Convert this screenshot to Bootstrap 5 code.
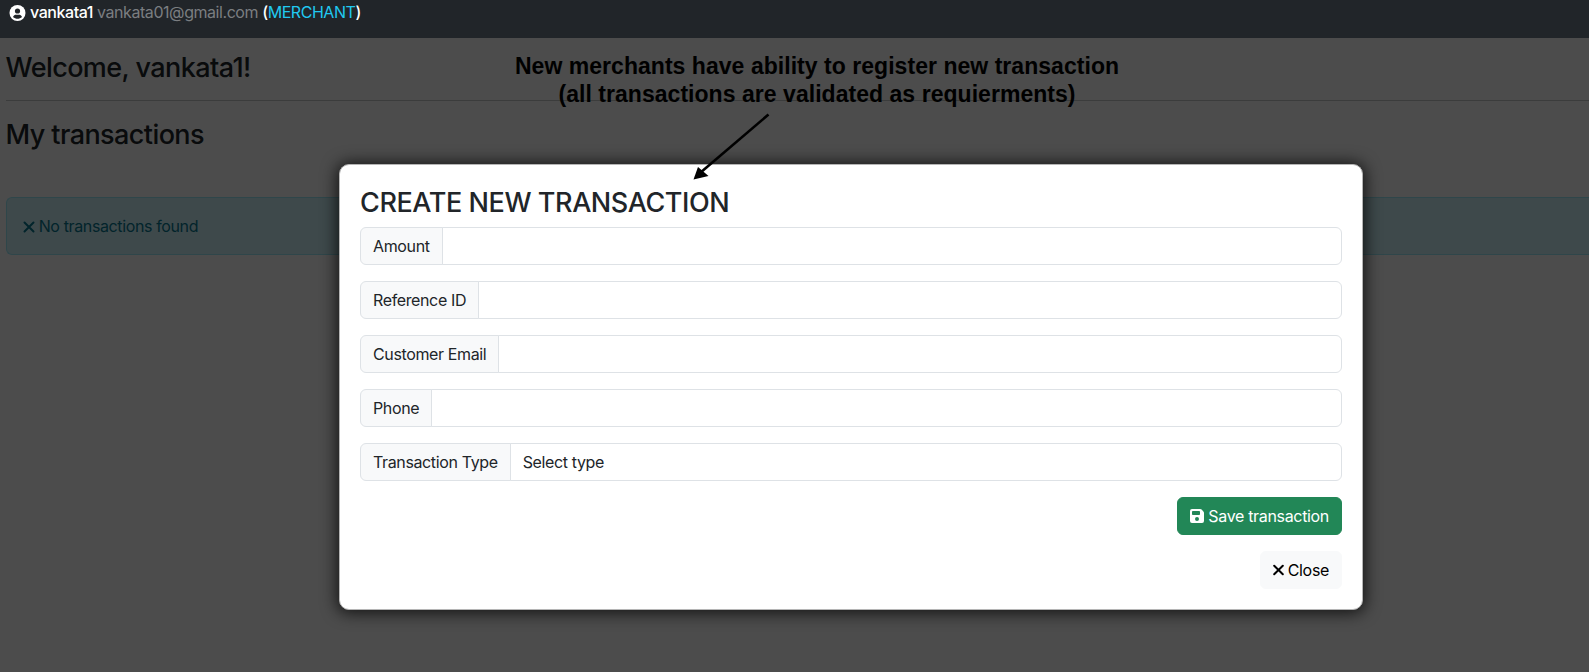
<!DOCTYPE html>
<html lang="en">
<head>
<meta charset="utf-8">
<meta name="viewport" content="width=device-width, initial-scale=1">
<title>Merchant transactions</title>
<link href="https://cdn.jsdelivr.net/npm/bootstrap@5.3.0/dist/css/bootstrap.min.css" rel="stylesheet">
<style>
html, body { height: 100%; overflow: hidden; }
body { font-family: Inter, "Liberation Sans", sans-serif; font-size: 16px; line-height: 24px; letter-spacing: -.37px; }
h3 { font-size: 27px; line-height: 33.6px; letter-spacing: -.58px; font-weight: 500; }
.topbar { height: 38px; padding-left: 9px; z-index: 1060; position: relative; }
.topbar .userline { letter-spacing: -.44px; }
.topbar .mail { color: #7b7e81; }
.topbar .role { color: #20c9f0; }
.page-body { padding: 13px 0 0 5.5px; }
.page-body h3 { margin: 0; }
.page-body hr { margin: 15.4px 0 16.6px; }
.notice { margin-top: 46px; border-right: 0; border-radius: 6px 0 0 6px; height: 58px; padding: 16px; }
.glyph { margin-bottom: 2px; }
.shade { position: absolute; inset: 0; background: rgba(0,0,0,.7); }
.dialog-box { position: absolute; left: 339px; top: 164px; width: 1024px; height: 446px; padding: 20px; background: #fff; border: 1px solid #b5b5b5; border-radius: 10px; box-shadow: 0 1px 16px 2px rgba(0,0,0,.75); }
.dialog-box h3 { padding-top: 1px; margin-bottom: 7px; letter-spacing: -.42px; }
.input-group-text, .form-control, .btn { letter-spacing: inherit; font-size: inherit; line-height: 24px; }
.input-group-text { background: #f8f9fa; }
.input-group { height: 38px; }
.btn { letter-spacing: -.33px; }
.btn-success { background: #228757; border-color: #228757; }
.note { position: absolute; left: 500px; top: 52px; width: 634px; font: bold 23px/28px "Liberation Sans", Arial, sans-serif; letter-spacing: .04px; color: #000; }
.pointer { position: absolute; left: 690px; top: 110px; }
</style>
</head>
<body>
<header class="topbar bg-dark text-white">
<div class="userline"><svg class="glyph" width="17" height="16" viewBox="0 0 17 16"><circle cx="8.5" cy="8" r="8" fill="#fff"/><circle cx="8.5" cy="6" r="2.6" fill="#212529"/><path d="M4 12c.6-1.700 1.900-2.300 3-2.300h3c1.100 0 2.400.6 3 2.300-2.500 2.400-6.500 2.400-9 0z" fill="#212529"/></svg>
<span class="fw-medium">vankata1</span> <span class="mail">vankata01@gmail.com</span> <span class="fw-medium">(</span><span class="role">MERCHANT</span><span class="fw-medium">)</span></div>
</header>
<main class="page-body">
<h3>Welcome, vankata1!</h3>
<hr>
<h3>My transactions</h3>
<div class="alert alert-info notice"><svg class="glyph" width="12" height="12" viewBox="0 0 12 12"><path d="M1.500 1.500l9 9M10.500 1.500l-9 9" stroke="currentColor" stroke-width="2" stroke-linecap="round"/></svg> No transactions found</div>
</main>
<div class="shade"></div>
<section class="dialog-box" role="dialog">
<h3>CREATE NEW TRANSACTION</h3>
<div class="input-group mb-3"><span class="input-group-text">Amount</span><input class="form-control" aria-label="Amount"></div>
<div class="input-group mb-3"><span class="input-group-text">Reference ID</span><input class="form-control" aria-label="Reference ID"></div>
<div class="input-group mb-3"><span class="input-group-text">Customer Email</span><input class="form-control" aria-label="Customer Email"></div>
<div class="input-group mb-3"><span class="input-group-text">Phone</span><input class="form-control" aria-label="Phone"></div>
<div class="input-group mb-3"><span class="input-group-text">Transaction Type</span><div class="form-control">Select type</div></div>
<div class="d-flex flex-column align-items-end gap-3">
<button class="btn btn-success"><svg class="glyph" width="14" height="14" viewBox="0 0 14 14"><path fill="#fff" fill-rule="evenodd" d="M2 0h8.200c.5 0 1 .2 1.400.6l1.800 1.800c.4.4.6.9.6 1.400V12a2 2 0 0 1-2 2H2a2 2 0 0 1-2-2V2a2 2 0 0 1 2-2zM2 2.800V5.200c0 .4.400.8.800.8h6.400c.4 0 .8-.4.800-.8V2.800c0-.4-.4-.8-.8-.8H2.800c-.4 0-.8.4-.8.8zM7 8a2 2 0 1 0 0 4 2 2 0 0 0 0-4z"/></svg> Save transaction</button>
<button class="btn btn-light"><svg class="glyph" width="11" height="12" viewBox="0 0 11 12"><path d="M1.200 1.700l8.600 8.600M9.800 1.700l-8.600 8.600" stroke="currentColor" stroke-width="2" stroke-linecap="round"/></svg> Close</button>
</div>
</section>
<div class="note text-center">New merchants have ability to register new transaction<br>(all transactions are validated as requierments)</div>
<svg class="pointer" width="84" height="74" viewBox="0 0 84 74"><path d="M78.500 4.500L10 63" stroke="#000" stroke-width="2.600"/><path d="M3.500 69.500L8 57L18.500 66z"/></svg>
<script src="https://cdn.jsdelivr.net/npm/bootstrap@5.3.0/dist/js/bootstrap.bundle.min.js"></script>
</body>
</html>
